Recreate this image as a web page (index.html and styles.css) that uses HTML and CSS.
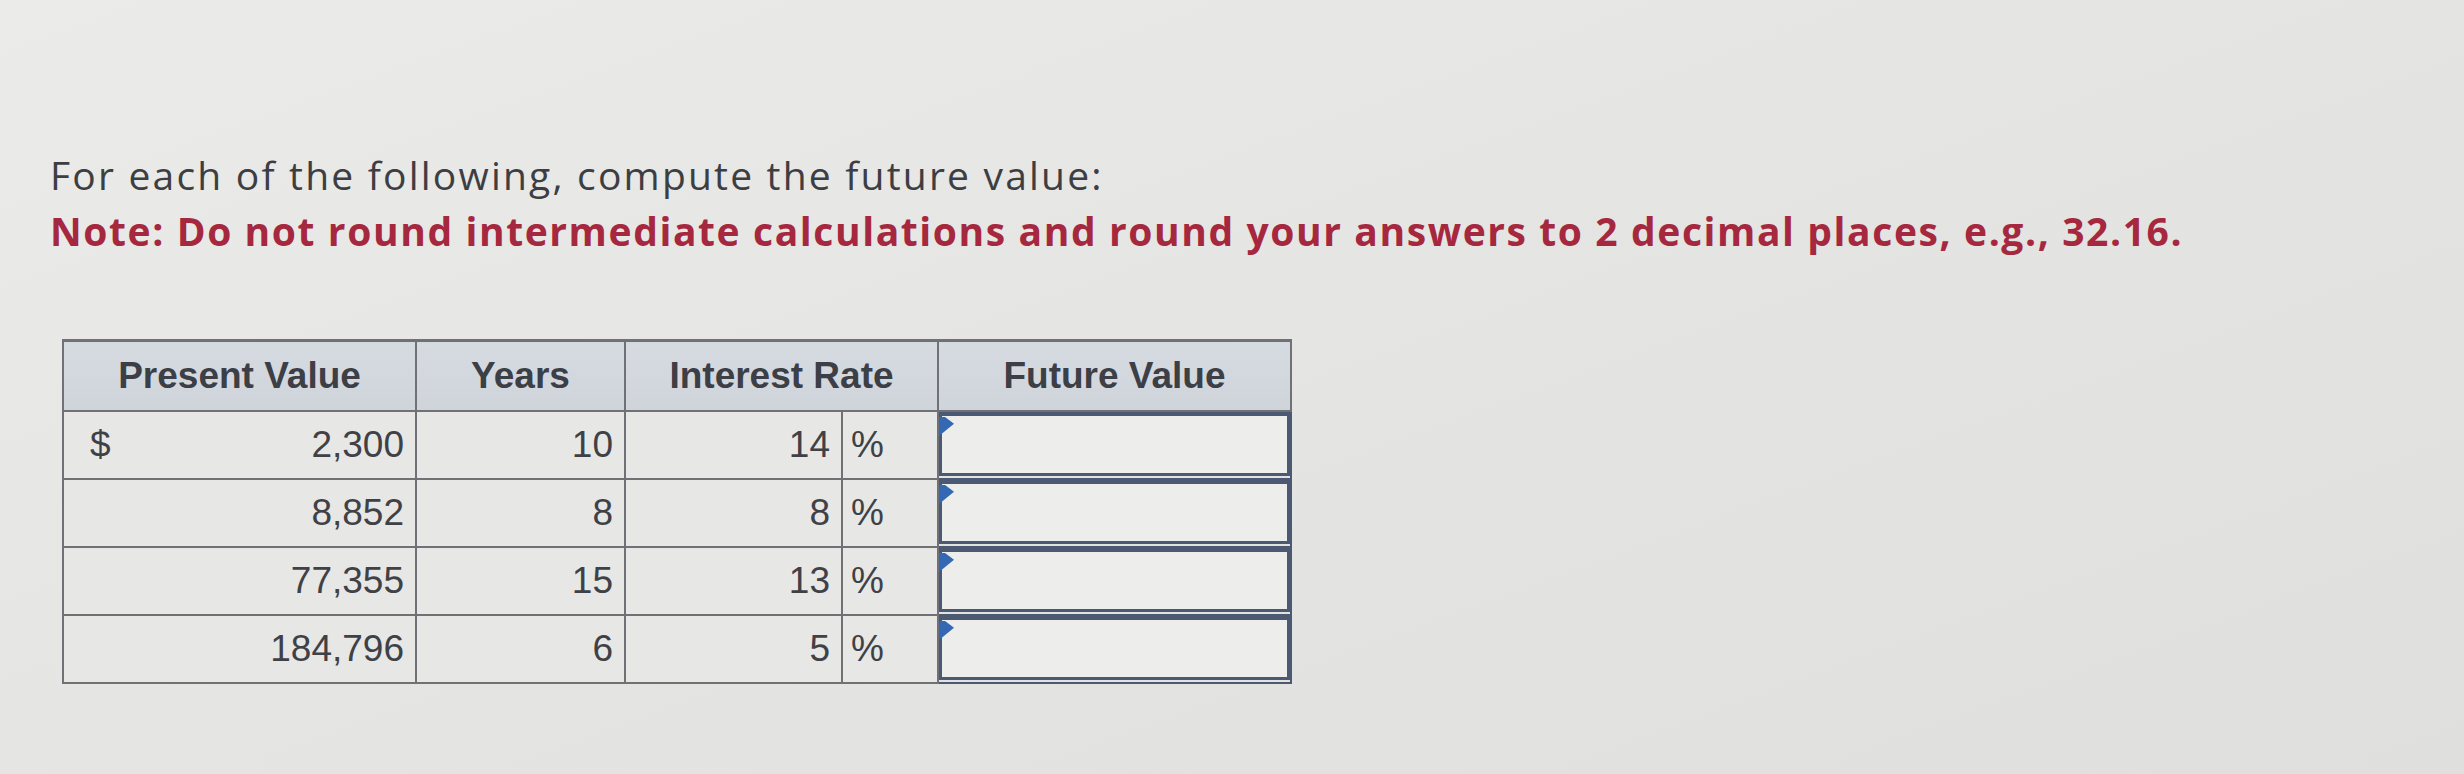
FILE: index.html
```html
<!DOCTYPE html>
<html lang="en">
<head>
<meta charset="utf-8">
<title>Future value</title>
<link rel="stylesheet" href="styles.css">
</head>
<body>
<main class="page">
  <p class="prompt">For each of the following, compute the future value:</p>
  <p class="note">Note: Do not round intermediate calculations and round your answers to 2 decimal places, e.g., 32.16.</p>
  <table class="fv-table">
    <colgroup>
      <col class="c-pv"><col class="c-yr"><col class="c-ir"><col class="c-pct"><col class="c-fv">
    </colgroup>
    <thead>
      <tr>
        <th>Present Value</th>
        <th>Years</th>
        <th colspan="2">Interest Rate</th>
        <th class="th-fv">Future Value</th>
      </tr>
    </thead>
    <tbody>
      <tr>
        <td class="num"><span class="cur">$</span>2,300</td>
        <td class="num">10</td>
        <td class="num">14</td>
        <td class="pct">%</td>
        <td class="fv"><div class="answer"></div></td>
      </tr>
      <tr>
        <td class="num">8,852</td>
        <td class="num">8</td>
        <td class="num">8</td>
        <td class="pct">%</td>
        <td class="fv"><div class="answer"></div></td>
      </tr>
      <tr>
        <td class="num">77,355</td>
        <td class="num">15</td>
        <td class="num">13</td>
        <td class="pct">%</td>
        <td class="fv"><div class="answer"></div></td>
      </tr>
      <tr>
        <td class="num">184,796</td>
        <td class="num">6</td>
        <td class="num">5</td>
        <td class="pct">%</td>
        <td class="fv"><div class="answer"></div></td>
      </tr>
    </tbody>
  </table>
</main>
</body>
</html>
```

FILE: styles.css
```css
html, body {
  margin: 0;
  padding: 0;
}
body {
  width: 2464px;
  height: 774px;
  overflow: hidden;
  background: linear-gradient(160deg, #ebebe9 0%, #e5e5e3 45%, #dfdfdd 100%);
  font-family: "Open Sans", "Lato", sans-serif;
}
.page {
  padding: 147px 0 0 50px;
}
.prompt, .note {
  margin: 0;
  font-size: 39px;
  line-height: 56px;
  white-space: nowrap;
}
.prompt {
  color: #3d3e42;
  letter-spacing: 2.2px;
}
.note {
  color: #a6283f;
  font-weight: 700;
  letter-spacing: 1.6px;
}
.fv-table {
  margin: 80px 0 0 12px;
  border-collapse: collapse;
  table-layout: fixed;
  width: 1228px;
  font-family: "Liberation Sans", Arial, sans-serif;
  font-size: 37px;
  color: #404146;
}
.c-pv { width: 353px; }
.c-yr { width: 209px; }
.c-ir { width: 217px; }
.c-pct { width: 96px; }
.c-fv { width: 353px; }
.fv-table th {
  height: 68px;
  padding: 0;
  background: linear-gradient(#d6dbe2, #cfd4db);
  border: 2px solid #6f7176;
  border-top-width: 3px;
  font-weight: 700;
  color: #3c3f45;
  text-align: center;
}
.fv-table td {
  height: 67px;
  padding: 0;
  background: #e7e7e5;
  border: 2px solid #707175;
  box-sizing: border-box;
}
.fv-table td.num {
  text-align: right;
  padding-right: 11px;
}
.fv-table td.pct {
  text-align: left;
  padding-left: 8px;
}
.cur {
  float: left;
  padding-left: 26px;
}
.fv-table td.fv {
  padding: 0 0 2px 0;
  border-color: #4b5a72;
  background: #e2e2e0;
}
.answer {
  position: relative;
  box-sizing: border-box;
  height: 64px;
  border: 3px solid #4b5a72;
  border-top-width: 4px;
  background: #ededeb;
}
.answer::before {
  content: "";
  position: absolute;
  left: -3px;
  top: 1px;
  width: 15px;
  height: 19px;
  background: #3568b3;
  clip-path: polygon(0 0, 40% 0, 100% 35%, 0 100%);
}
```
